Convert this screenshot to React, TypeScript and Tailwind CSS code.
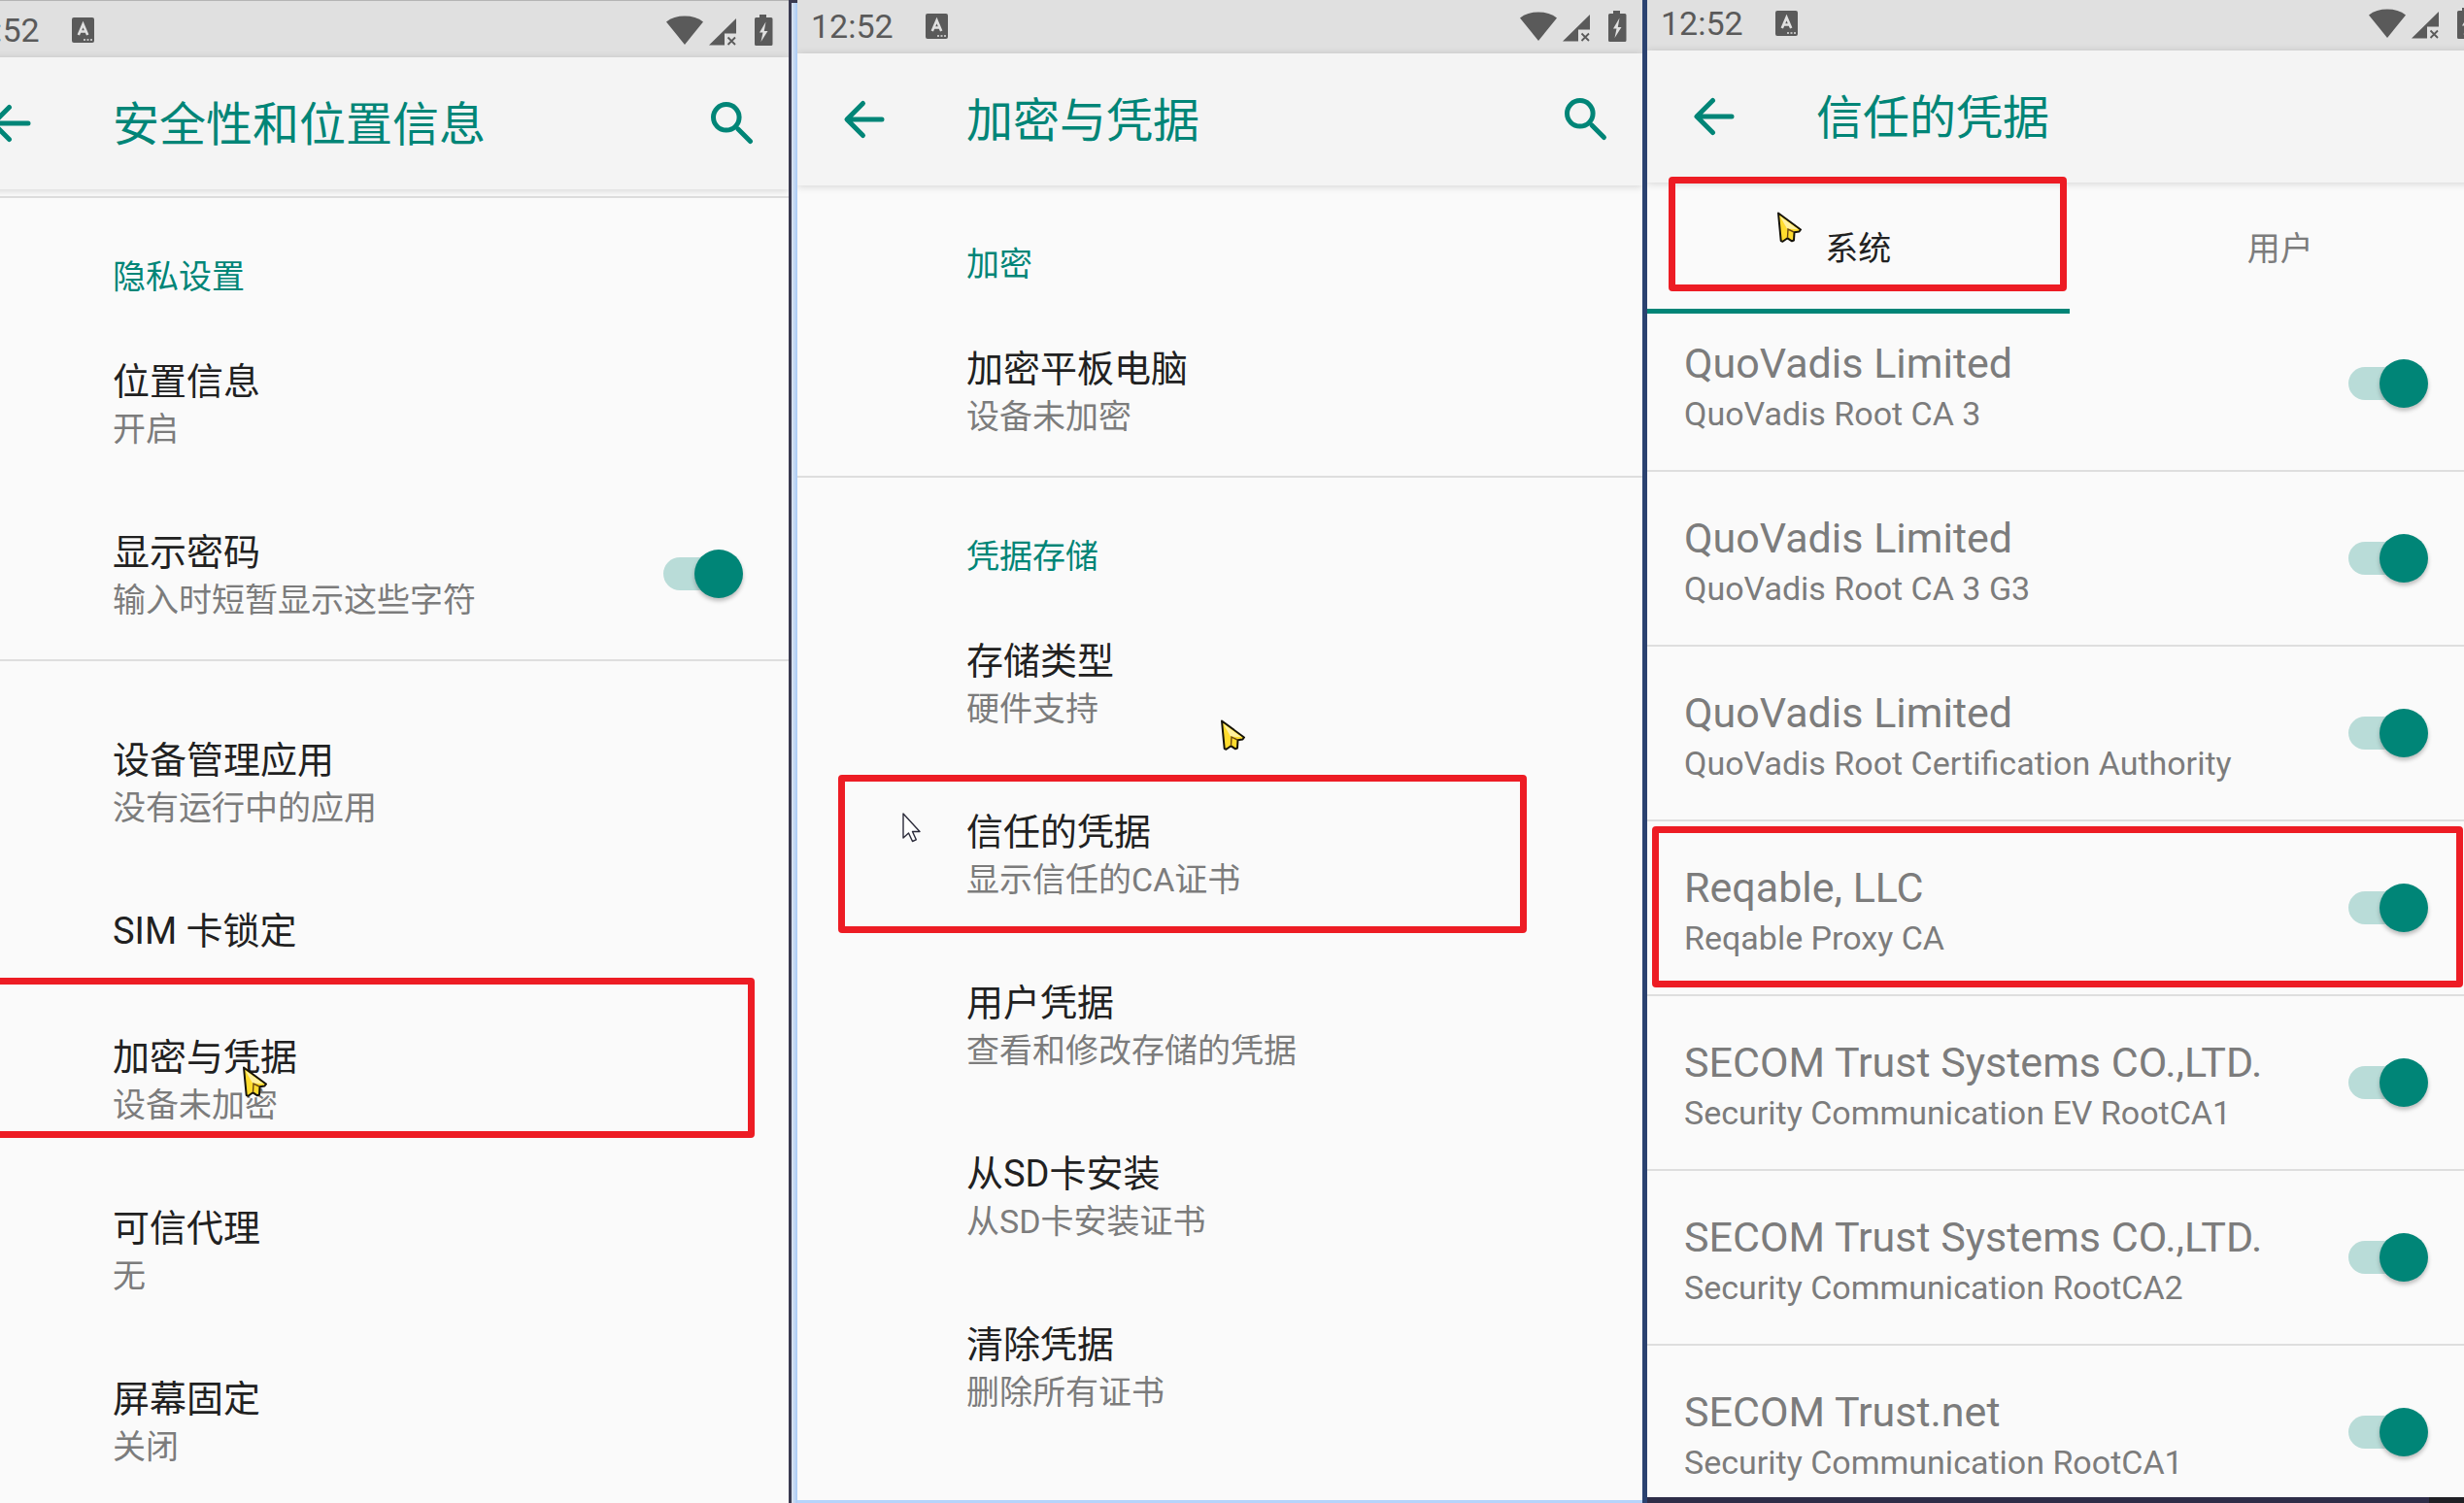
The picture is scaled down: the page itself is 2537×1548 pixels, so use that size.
import { useState } from "react";
import type { ReactNode } from "react";

type Item = {
  title: string;
  summary?: string;
};

const DEVICE_ITEMS: Item[] = [
  { title: "设备管理应用", summary: "没有运行中的应用" },
  { title: "SIM 卡锁定" },
];

const AGENT_ITEMS: Item[] = [
  { title: "可信代理", summary: "无" },
  { title: "屏幕固定", summary: "关闭" },
];

const STORE_ITEMS: Item[] = [
  { title: "用户凭据", summary: "查看和修改存储的凭据" },
  { title: "从SD卡安装", summary: "从SD卡安装证书" },
  { title: "清除凭据", summary: "删除所有证书" },
];

const CERTIFICATES = [
  { owner: "QuoVadis Limited", name: "QuoVadis Root CA 3" },
  { owner: "QuoVadis Limited", name: "QuoVadis Root CA 3 G3" },
  { owner: "QuoVadis Limited", name: "QuoVadis Root Certification Authority" },
  { owner: "Reqable, LLC", name: "Reqable Proxy CA", marked: true },
  { owner: "SECOM Trust Systems CO.,LTD.", name: "Security Communication EV RootCA1" },
  { owner: "SECOM Trust Systems CO.,LTD.", name: "Security Communication RootCA2" },
  { owner: "SECOM Trust.net", name: "Security Communication RootCA1" },
];

function BackIcon() {
  return (
    <svg viewBox="0 0 58 58" className="size-[58px]" fill="none" stroke="currentColor" strokeWidth="5" strokeLinecap="round" strokeLinejoin="round">
      <path d="M48 29H13M28.5 12.5L12 29l16.5 16.5" />
    </svg>
  );
}

function SearchIcon() {
  return (
    <svg viewBox="0 0 58 58" className="size-[58px]" fill="none" stroke="currentColor" strokeWidth="5" strokeLinecap="round">
      <circle cx="22.8" cy="22.8" r="13.3" />
      <path d="M35 35l12.5 12.5" />
    </svg>
  );
}

function KeyboardBadge() {
  return (
    <svg viewBox="0 0 23 26" className="h-[26px] w-[23px]">
      <rect width="23" height="26" rx="2" fill="#5a5a5a" />
      <path d="M6.8 18L11.5 7 16.2 18M8.4 14.5h6.2" fill="none" stroke="#e0e0e0" strokeWidth="2.6" />
      <path d="M12 23h2M15.5 23h2M19 23h2" stroke="#e0e0e0" strokeWidth="1.5" />
    </svg>
  );
}

function SystemIcons() {
  return (
    <svg viewBox="0 0 110 32" className="h-8 w-[110px]" fill="#5a5a5a">
      <path d="M0 7.5C5 3.600 11.500 1.600 19 1.600s14 2 19 5.900L19 31z" />
      <path d="M72 4v15.5H60V31.5H44z" />
      <path d="M63.5 23.500l7.500 7.500M71 23.500L63.500 31" stroke="#5a5a5a" strokeWidth="1.8" fill="none" />
      <path d="M96 0h7v3h5q1.500 0 1.500 1.500v26q0 1.500-1.500 1.500H92.500q-1.500 0-1.500-1.500v-26q0-1.500 1.500-1.500H96z" />
      <path d="M102.5 7.500L96 18.500h3.500L97.500 28l7-11h-3.700z" fill="#e0e0e0" />
    </svg>
  );
}

function GoldCursor({ className }: { className: string }) {
  return (
    <svg viewBox="0 0 26 32" className={`pointer-events-none absolute z-10 h-8 w-[26px] ${className}`}>
      <path d="M2 1.500L25 18.500l-1.500 2-5 .8-.5 8.200-2 .8-4.500-3-5 3.500-1.800-.8z" fill="#ffdc2e" stroke="#16130a" strokeWidth="2" strokeLinejoin="round" />
      <path d="M3.500 4.500L22.500 18.300 11 17.500z" fill="#fff0a0" />
      <path d="M11.500 26.500l.5-8.500 6 3" stroke="#6b4610" strokeWidth="1.400" fill="none" />
    </svg>
  );
}

function WhiteCursor({ className }: { className: string }) {
  return (
    <svg viewBox="0 0 20 31" className={`pointer-events-none absolute z-10 h-[31px] w-5 ${className}`}>
      <path d="M1 1v25l5.500-5 4 8.500 3.800-1.700-3.800-8.300H18z" fill="#fff" stroke="#2b2b3a" strokeWidth="1.4" strokeLinejoin="round" />
    </svg>
  );
}

function Marker({ className }: { className: string }) {
  return <span className={`pointer-events-none absolute z-10 rounded-[4px] border-[7px] border-[#ed1c24] ${className}`} />;
}

function Toggle({ id, label }: { id: string; label: string }) {
  const [on, setOn] = useState(true);
  return (
    <label htmlFor={id} className="relative flex h-[50px] w-[82px] shrink-0 cursor-pointer items-center">
      <input id={id} type="checkbox" aria-label={label} checked={on} onChange={() => setOn(!on)} className="peer sr-only" />
      <span className="h-[34px] w-[76px] rounded-full bg-gray-300 peer-checked:bg-[#b9dcd8]" />
      <span className="absolute left-0 size-[50px] rounded-full bg-white shadow-[0_3px_4px_rgba(0,0,0,0.25)] peer-checked:left-8 peer-checked:bg-[#008577]" />
    </label>
  );
}

function StatusBar({ className }: { className: string }) {
  return (
    <div className={`flex shrink-0 items-end bg-[#e0e0e0] pr-4 pb-[2px] pl-[14px] ${className}`}>
      <div className="flex h-[52px] flex-1 items-center text-[#5a5a5a]">
        <span className="text-[34px] leading-10">12:52</span>
        <span className="ml-[33px]">
          <KeyboardBadge />
        </span>
        <span className="ml-auto">
          <SystemIcons />
        </span>
      </div>
    </div>
  );
}

function AppBar({ title, search = false }: { title: string; search?: boolean }) {
  return (
    <header className="relative z-[1] flex h-[136px] shrink-0 items-center bg-[#f4f4f4] pr-[29px] pl-[39px] text-[#008577] shadow-[0_1px_8px_rgba(0,0,0,0.16)]">
      <button type="button" aria-label="返回">
        <BackIcon />
      </button>
      <h1 className="ml-[77px] flex-1 pt-[3px] text-[48px] leading-[64px]">{title}</h1>
      {search && (
        <button type="button" aria-label="搜索">
          <SearchIcon />
        </button>
      )}
    </header>
  );
}

function SectionLabel({ children }: { children: ReactNode }) {
  return <h2 className="pt-[58px] pb-[19px] pl-[174px] text-[34px] leading-[46px] text-[#008577]">{children}</h2>;
}

function Row({ title, summary }: Item) {
  return (
    <button type="button" className="block w-full pt-10 pb-[38px] pl-[174px] text-left">
      <span className="block text-[38px] leading-[52px] text-[#212121]">{title}</span>
      {summary && <span className="block text-[34px] leading-[46px] text-[#7c7c7c]">{summary}</span>}
    </button>
  );
}

function SecurityScreen() {
  return (
    <section className="relative overflow-hidden bg-[#fafafa]">
      {/* the left edge of this phone runs off the page */}
      <div className="-ml-[58px] flex flex-col">
        <StatusBar className="h-[59px] border-t border-[#b4b4b4]" />
        <AppBar title="安全性和位置信息" search />
        <div className="h-[9px] border-b-2 border-[#dedede]" />
        <SectionLabel>隐私设置</SectionLabel>
        <Row title="位置信息" summary="开启" />
        <div className="flex items-center border-b-2 border-[#dedede] pr-[47px]">
          <Row title="显示密码" summary="输入时短暂显示这些字符" />
          <Toggle id="show-password" label="显示密码" />
        </div>
        <div className="pt-9">
          {DEVICE_ITEMS.map((item) => (
            <Row key={item.title} {...item} />
          ))}
          <div className="relative">
            <Row title="加密与凭据" summary="设备未加密" />
            <Marker className="-top-4 right-[35px] bottom-[27px] left-0" />
            <GoldCursor className="top-[75px] left-[307px]" />
          </div>
          {AGENT_ITEMS.map((item) => (
            <Row key={item.title} {...item} />
          ))}
        </div>
      </div>
    </section>
  );
}

function EncryptionScreen() {
  return (
    <section className="overflow-hidden border-b-[3px] border-[#b5d4fb] bg-[#fafafa]">
      <StatusBar className="h-[55px]" />
      <AppBar title="加密与凭据" search />
      <SectionLabel>加密</SectionLabel>
      <div className="border-b-2 border-[#dedede]">
        <Row title="加密平板电脑" summary="设备未加密" />
      </div>
      <SectionLabel>凭据存储</SectionLabel>
      <div className="relative">
        <Row title="存储类型" summary="硬件支持" />
        <GoldCursor className="top-[126px] left-[435px]" />
      </div>
      <div className="relative">
        <Row title="信任的凭据" summary="显示信任的CA证书" />
        <Marker className="top-[7px] right-[119px] bottom-[6px] left-[42px]" />
        <WhiteCursor className="top-[46px] left-[108px]" />
      </div>
      {STORE_ITEMS.map((item) => (
        <Row key={item.title} {...item} />
      ))}
    </section>
  );
}

function TrustedScreen() {
  const [tab, setTab] = useState("系统");
  return (
    <section className="flex h-screen flex-col overflow-hidden bg-[#fafafa]">
      {/* the right edge of this phone runs off the page */}
      <div className="-mr-7 flex min-h-0 flex-1 flex-col">
        <StatusBar className="h-[52px]" />
        <AppBar title="信任的凭据" />
        <div role="tablist" className="relative z-[2] grid h-[135px] shrink-0 grid-cols-2">
          {["系统", "用户"].map((name) => (
            <button
              key={name}
              type="button"
              role="tab"
              aria-selected={tab === name}
              onClick={() => setTab(name)}
              className="relative text-[34px] leading-[46px] text-[#7c7c7c] aria-selected:text-[#212121]"
            >
              {name}
              {tab === name && <span className="absolute inset-x-0 bottom-0 h-[5px] bg-[#008577]" />}
            </button>
          ))}
          <div className="pointer-events-none absolute inset-y-0 left-0 w-1/2">
            <Marker className="-top-[6px] right-[3px] bottom-[23px] left-[22px]" />
            <GoldCursor className="top-[30px] left-[133px]" />
          </div>
        </div>
        <div className="min-h-0 flex-1 overflow-hidden">
          {/* scrolled a little way under the tabs */}
          <ul className="-mt-[17px]">
            {CERTIFICATES.map((cert) => (
              <li key={cert.owner + cert.name} className="relative flex items-center border-b-2 border-[#dedede] pr-[65px] pl-[38px] text-[#7c7c7c]">
                <div className="flex-1 pt-10 pb-[34px]">
                  <p className="text-[43px] leading-[56px]">{cert.owner}</p>
                  <p className="text-[34px] leading-[48px]">{cert.name}</p>
                </div>
                <Toggle id={cert.name} label={cert.name} />
                {cert.marked && <Marker className="top-[5px] right-[29px] bottom-[7px] left-[5px]" />}
              </li>
            ))}
          </ul>
        </div>
      </div>
      <div className="flex h-[6px] shrink-0 bg-[#2e2d48]">
        <span className="ml-auto w-9 bg-[#1f1f24]" />
      </div>
    </section>
  );
}

export default function App() {
  return (
    <main className="grid h-screen grid-cols-[812fr_9px_870fr_5px_841fr] overflow-hidden bg-[#fafafa] font-[Roboto,'Noto_Sans_CJK_SC',sans-serif]">
      <SecurityScreen />
      <div className="border-t-[3px] border-l-[3px] border-[#3a3a50] bg-linear-to-r from-[#dbe3ee] to-[#a9cbf7]" />
      <EncryptionScreen />
      <div className="bg-[#2b4270]" />
      <TrustedScreen />
    </main>
  );
}
